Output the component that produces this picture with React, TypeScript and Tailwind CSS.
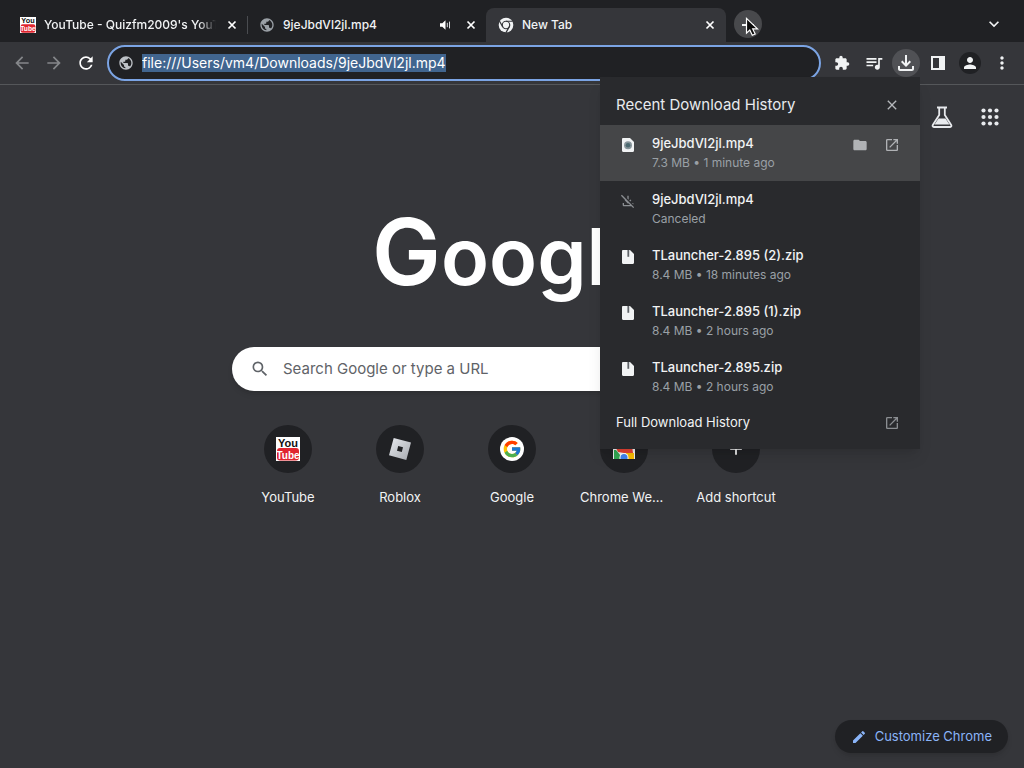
import type { ReactNode } from "react";
import {
  MdAdd, MdArrowBack, MdArrowForward, MdClose, MdEdit, MdExtension, MdFolder,
  MdKeyboardArrowDown, MdMoreVert, MdOpenInNew, MdOutlineFileDownload,
  MdOutlineFileDownloadOff, MdPerson, MdPublic, MdQueueMusic, MdRefresh, MdSearch,
} from "react-icons/md";
import { FcGoogle } from "react-icons/fc";

function YouTubeIcon({ className }: { className: string }) {
  return (
    <svg viewBox="0 0 24 24" className={className} aria-hidden="true">
      <rect width="24" height="24" fill="#fff" />
      <text x="12" y="9.5" textAnchor="middle" fontSize="11" fontWeight="700" fontFamily="Liberation Sans Narrow, Liberation Sans, sans-serif" fill="#111">You</text>
      <rect x="1" y="11" width="22" height="12.5" rx="3" fill="#e0252f" />
      <text x="12" y="21.5" textAnchor="middle" fontSize="10" fontWeight="700" fontFamily="Liberation Sans Narrow, Liberation Sans, sans-serif" fill="#fff">Tube</text>
    </svg>
  );
}

function ChromeIcon({ className }: { className: string }) {
  return (
    <svg viewBox="0 0 24 24" className={className} aria-hidden="true">
      <circle cx="12" cy="12" r="11" fill="#f1f3f4" />
      <circle cx="12" cy="12" r="5.6" fill="none" stroke="#35363a" strokeWidth="1.8" />
      <path d="M12 6.4h10M7.15 14.8 2.1 6.1M16.85 14.8 11.9 23.4" stroke="#35363a" strokeWidth="1.8" />
      <circle cx="12" cy="12" r="3.6" fill="#f1f3f4" />
    </svg>
  );
}

function SoundIcon() {
  return (
    <svg viewBox="0 0 12 12" className="size-3 shrink-0" aria-label="Playing audio">
      <path d="M1 4.3h2.3L6.5 1.3v9.4L3.3 7.7H1z" fill="#fff" />
      <path d="M8.3 3.8v4.4M10.5 2.6v6.8" stroke="#dadce0" strokeWidth="1" />
    </svg>
  );
}

function FileIcon({ kind }: { kind: string }) {
  return (
    <svg viewBox="0 0 14 16" className="h-4 w-3.5" aria-hidden="true">
      <path d="M2.2 1H9l4 4v8.8c0 .7-.5 1.2-1.2 1.2H2.2C1.5 15 1 14.5 1 13.8V2.2C1 1.5 1.5 1 2.2 1z" fill="#f1f3f4" />
      {kind === "zip" ? (
        <path d="M6.4 1h1.8v6.8H6.4z" fill="#5f6368" />
      ) : (
        <>
          <circle cx="7" cy="8.2" r="4" fill="#87949a" />
          <circle cx="7" cy="8.2" r="2.3" fill="#4b6970" />
        </>
      )}
    </svg>
  );
}

function PlusPointer() {
  return (
    <svg viewBox="0 0 28 28" className="size-7 shrink-0" aria-hidden="true">
      <path d="M8 15h12" stroke="#f1f3f4" strokeWidth="2" />
      <path d="M12.5 8.3v14.8l3.3-3.1 2.5 5.3 2.9-1.3-2.5-5.1h4.8z" fill="#0b0b0b" stroke="#fff" strokeWidth="1.2" />
    </svg>
  );
}

function TabClose() {
  return (
    <button aria-label="Close tab" className="flex size-4 shrink-0 items-center justify-center text-white">
      <svg viewBox="0 0 16 16" className="size-4" aria-hidden="true">
        <path d="M4.5 4.5l7 7M11.5 4.5l-7 7" stroke="currentColor" strokeWidth="1.7" />
      </svg>
    </button>
  );
}

function ToolButton({ label, className = "", children }: { label: string; className?: string; children: ReactNode }) {
  return (
    <button aria-label={label} className={`flex size-8 shrink-0 items-center justify-center ${className}`}>
      {children}
    </button>
  );
}

const downloads = [
  { name: "9jeJbdVl2jl.mp4", detail: "7.3 MB • 1 minute ago", kind: "video", active: true },
  { name: "9jeJbdVl2jl.mp4", detail: "Canceled", kind: "canceled", active: false },
  { name: "TLauncher-2.895 (2).zip", detail: "8.4 MB • 18 minutes ago", kind: "zip", active: false },
  { name: "TLauncher-2.895 (1).zip", detail: "8.4 MB • 2 hours ago", kind: "zip", active: false },
  { name: "TLauncher-2.895.zip", detail: "8.4 MB • 2 hours ago", kind: "zip", active: false },
];

function DownloadPanel() {
  return (
    <section aria-label="Downloads" className="absolute top-[77px] right-[104px] z-10 w-80 bg-[#292a2d] shadow-lg">
      <header className="flex h-12 items-center justify-between pt-2 pr-5 pl-4">
        <h2 className="text-[15px] text-[#e8eaed]">Recent Download History</h2>
        <button aria-label="Close" className="text-[#b5b8bc]"><MdClose className="size-4" /></button>
      </header>
      <ul>
        {downloads.map((d, i) => (
          <li key={i} className={`flex h-14 items-start pt-2 pr-5 pl-5 ${d.active ? "bg-[#454648]" : ""}`}>
            <span className="mt-1 flex w-4 justify-center">
              {d.kind === "canceled" ? <MdOutlineFileDownloadOff className="size-4 text-[#8b8e92]" /> : <FileIcon kind={d.kind} />}
            </span>
            <div className="ml-4 flex-1">
              <p className="text-[13px] leading-5 font-medium text-[#f1f3f4]">{d.name}</p>
              <p className="text-xs leading-5 text-[#9aa0a6]">{d.detail}</p>
            </div>
            {d.active && (
              <span className="mt-1 flex gap-4 text-[#b0b2b5]">
                <button aria-label="Show in folder"><MdFolder className="size-4" /></button>
                <button aria-label="Open in new tab"><MdOpenInNew className="size-4" /></button>
              </span>
            )}
          </li>
        ))}
      </ul>
      <a href="#downloads" className="flex h-11 items-center justify-between pr-5 pb-2 pl-4 text-[13px] text-[#f1f3f4]">
        Full Download History
        <MdOpenInNew className="size-4 text-[#8b8e92]" />
      </a>
    </section>
  );
}

function Shortcut({ label, children }: { label: string; children: ReactNode }) {
  return (
    <a href="#shortcut" className="flex w-28 flex-col items-center">
      <span className="flex size-12 items-center justify-center rounded-full bg-[#202124]">{children}</span>
      <span className="mt-4 w-[88px] truncate text-center text-[13px] leading-4 text-[#f1f3f4]">{label}</span>
    </a>
  );
}

export default function App() {
  return (
    <div className="relative flex min-h-screen flex-col bg-[#35363a] font-['Inter','Liberation_Sans',sans-serif] text-white">
      <div className="flex h-[42px] items-end bg-[#202124] pr-5 text-xs font-medium text-[#f1f3f4]">
        <div className="flex h-[34px] w-[247px] items-center pr-[7px] pl-5">
          <YouTubeIcon className="size-4 shrink-0" />
          <span className="ml-2 flex-1 overflow-hidden whitespace-nowrap [mask-image:linear-gradient(to_right,black_90%,transparent)]">YouTube - Quizfm2009's YouTube</span>
          <span className="ml-2"><TabClose /></span>
        </div>
        <div className="mb-2 h-[18px] w-px bg-[#4a4c50]" />
        <div className="flex h-[34px] w-[238px] items-center pr-[7px] pl-[11px]">
          <MdPublic className="size-4 text-[#9aa0a6]" />
          <span className="ml-2 flex-1">9jeJbdVl2jl.mp4</span>
          <SoundIcon />
          <span className="ml-3"><TabClose /></span>
        </div>
        <div className="flex h-[34px] w-60 items-center rounded-t-lg bg-[#35363a] pr-2 pl-3">
          <ChromeIcon className="size-4" />
          <span className="ml-2 flex-1">New Tab</span>
          <TabClose />
        </div>
        <button aria-label="New tab" className="mb-1 ml-2 flex size-7 items-center justify-center rounded-full bg-[#48494c]"><PlusPointer /></button>
        <button aria-label="Search tabs" className="mb-2 ml-auto"><MdKeyboardArrowDown className="size-5" /></button>
      </div>

      <div className="flex h-[43px] items-center border-b border-[#55575a] px-1.5">
        <ToolButton label="Back" className="text-[#85878a]"><MdArrowBack className="size-5" /></ToolButton>
        <ToolButton label="Forward" className="text-[#85878a]"><MdArrowForward className="size-5" /></ToolButton>
        <ToolButton label="Reload"><MdRefresh className="size-5" /></ToolButton>
        <div className="ml-[5px] flex h-9 flex-1 items-center rounded-full border-2 border-[#7ba4e4] bg-[#202124] pl-[9px]">
          <MdPublic className="size-4 shrink-0 text-[#bdc1c6]" />
          <input aria-label="Address" defaultValue="file:///Users/vm4/Downloads/9jeJbdVl2jl.mp4" className="field-sizing-content ml-2 h-[18px] bg-[#41658f] text-sm text-white outline-none" />
        </div>
        <div className="ml-[5px] flex text-[#f1f3f4]">
          <ToolButton label="Extensions"><MdExtension className="size-4" /></ToolButton>
          <ToolButton label="Media controls"><MdQueueMusic className="size-5" /></ToolButton>
          <ToolButton label="Downloads"><span className="flex size-7 items-center justify-center rounded-full bg-[#505155]"><MdOutlineFileDownload className="size-6" /></span></ToolButton>
          <ToolButton label="Side panel">
            <svg viewBox="0 0 16 16" className="size-4" aria-hidden="true">
              <path d="M2 2h12v12H2z" fill="none" stroke="currentColor" strokeWidth="2" />
              <path d="M9 2h5v12H9z" fill="currentColor" />
            </svg>
          </ToolButton>
          <ToolButton label="Profile"><span className="flex size-[22px] items-center justify-center rounded-full bg-[#202124]"><MdPerson className="size-[18px]" /></span></ToolButton>
          <ToolButton label="Menu"><MdMoreVert className="size-5" /></ToolButton>
        </div>
      </div>

      <DownloadPanel />

      <main className="flex flex-1 flex-col items-center">
        <nav className="flex h-16 w-full items-center justify-end gap-6 pr-[22px]">
          <button aria-label="Search labs">
            <svg viewBox="0 0 24 24" className="size-6" aria-hidden="true">
              <path d="M7 2.5h10M9.2 3v7L2.8 20c-.6 1 0 2 1 2h16.4c1 0 1.6-1 1-2L14.8 10V3" fill="none" stroke="#e8eaed" strokeWidth="1.8" />
              <path d="M8.5 13.5h7l4 6h-15z" fill="#e8eaed" />
            </svg>
          </button>
          <button aria-label="Google apps">
            <svg viewBox="0 0 24 24" className="size-6" fill="#e8eaed" aria-hidden="true">
              {[5.5, 12, 18.5].map((y) => [5.5, 12, 18.5].map((x) => <circle key={`${x}-${y}`} cx={x} cy={y} r="2.1" />))}
            </svg>
          </button>
        </nav>
        <h1 className="mt-12 flex h-[110px] w-[280px] items-baseline text-[79px] leading-[110px] font-semibold whitespace-nowrap">
          <span><span className="text-[92px]">G</span>oogle</span>
        </h1>
        <form className="mt-10 flex h-11 w-[560px] items-center rounded-full bg-white pl-[18px] shadow-md">
          <MdSearch className="size-5 text-[#5f6368]" />
          <input aria-label="Search Google or type a URL" placeholder="Search Google or type a URL" className="ml-[13px] flex-1 text-[15px] text-[#5f6368] outline-none placeholder:text-[#5f6368]" />
        </form>
        <div className="mt-[34px] flex">
          <Shortcut label="YouTube"><YouTubeIcon className="size-6" /></Shortcut>
          <Shortcut label="Roblox">
            <svg viewBox="0 0 24 24" className="size-6" aria-hidden="true">
              <defs><linearGradient id="silver" x1="0" y1="0" x2="1" y2="1"><stop stopColor="#e8eaef" /><stop offset="1" stopColor="#a5a8ae" /></linearGradient></defs>
              <path d="M5.7 1 23 5.6 18.3 23 1 18.3zM10.2 9 9 13.8l4.8 1.2L15 10.2z" fill="url(#silver)" fillRule="evenodd" />
            </svg>
          </Shortcut>
          <Shortcut label="Google"><span className="flex size-6 items-center justify-center rounded-full bg-white"><FcGoogle className="size-5" /></span></Shortcut>
          <Shortcut label="Chrome Web Store">
            <svg viewBox="0 0 24 24" className="size-6" aria-hidden="true">
              <path d="M1 3h22v19H1z" fill="#f1f3f4" />
              <path d="M3 9h17l1 7h-9l-6-1z" fill="#ea4335" />
              <path d="M2 13h2l5 6-1 3H2z" fill="#34a853" />
              <path d="M14 16h8v6h-8z" fill="#fbbc04" />
              <path d="M7.5 22v-1.500a4.500 4.500 0 0 1 9 0V22z" fill="#fff" />
              <path d="M8.500 22v-1.500a3.500 3.500 0 0 1 7 0V22z" fill="#4285f4" />
            </svg>
          </Shortcut>
          <Shortcut label="Add shortcut"><MdAdd className="size-5" /></Shortcut>
        </div>
        <div className="mt-auto flex w-full justify-end pr-4 pb-[15px]">
          <button className="flex h-[33px] items-center gap-2 rounded-full bg-[#202124] px-4 text-[13px] text-[#8ab4f8] shadow-md">
            <MdEdit className="size-4" />
            Customize Chrome
          </button>
        </div>
      </main>
    </div>
  );
}
